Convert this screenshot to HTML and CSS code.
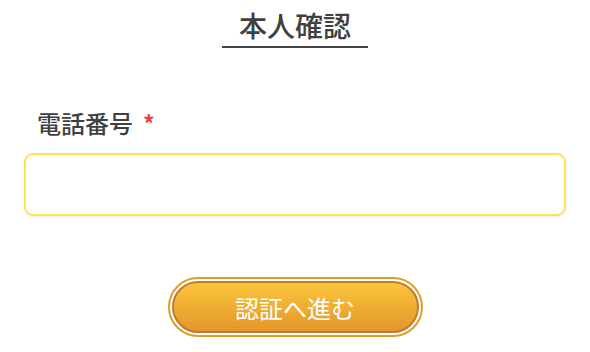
FILE: index.html
```html
<!DOCTYPE html>
<html lang="ja">
<head>
<meta charset="utf-8">
<link rel="stylesheet" href="styles.css">
</head>
<body>
<main class="page">
  <header class="head">
    <h1 class="title">本人確認</h1>
  </header>
  <section class="field">
    <label class="label" for="tel">電話番号<span class="req">*</span></label>
    <input class="input" id="tel" type="tel">
  </section>
  <div class="actions">
    <div class="btn-ring">
      <button class="btn" type="button">認証へ進む</button>
    </div>
  </div>
</main>
</body>
</html>
```
FILE: styles.css
```css
* { box-sizing: border-box; }
html, body { margin: 0; padding: 0; background: #fff; }
body {
  font-family: "Noto Sans CJK JP", "Noto Sans", sans-serif;
  color: #3d3d3d;
}
.page {
  width: 590px;
  padding: 0 24px;
}
.head {
  display: flex;
  justify-content: center;
  padding-top: 5px;
}
.title {
  margin: 0;
  font-size: 28px;
  font-weight: 500;
  line-height: 40px;
  padding: 0 17px 1px;
  border-bottom: 2px solid #444;
  color: #404040;
}
.field {
  margin-top: 58px;
  display: flex;
  flex-direction: column;
}
.label {
  font-size: 24px;
  font-weight: 500;
  line-height: 34px;
  padding-left: 13px;
  color: #404040;
}
.req {
  color: #ee3b3b;
  margin-left: 10px;
  font-size: 23px;
  font-weight: 700;
}
.input {
  margin-top: 13px;
  height: 63px;
  width: 100%;
  border: 2px solid #fde35a;
  border-radius: 9px;
  background: #fff;
  box-shadow: 0 1px 3px rgba(0,0,0,0.08);
  outline: none;
}
.actions {
  display: flex;
  justify-content: center;
  margin-top: 61px;
}
.btn-ring {
  border: 2px solid #d9a024;
  border-radius: 32px;
  padding: 2px;
  background: #fff;
}
.btn {
  display: block;
  width: 247px;
  height: 52px;
  border: 2px solid #c27a32;
  border-radius: 28px;
  background: linear-gradient(#fbc53b, #e3962c);
  color: #fff;
  font-family: "Noto Sans CJK JP", "Noto Sans", sans-serif;
  font-size: 24px;
  font-weight: 400;
  padding: 0;
  letter-spacing: 0;
}
```
